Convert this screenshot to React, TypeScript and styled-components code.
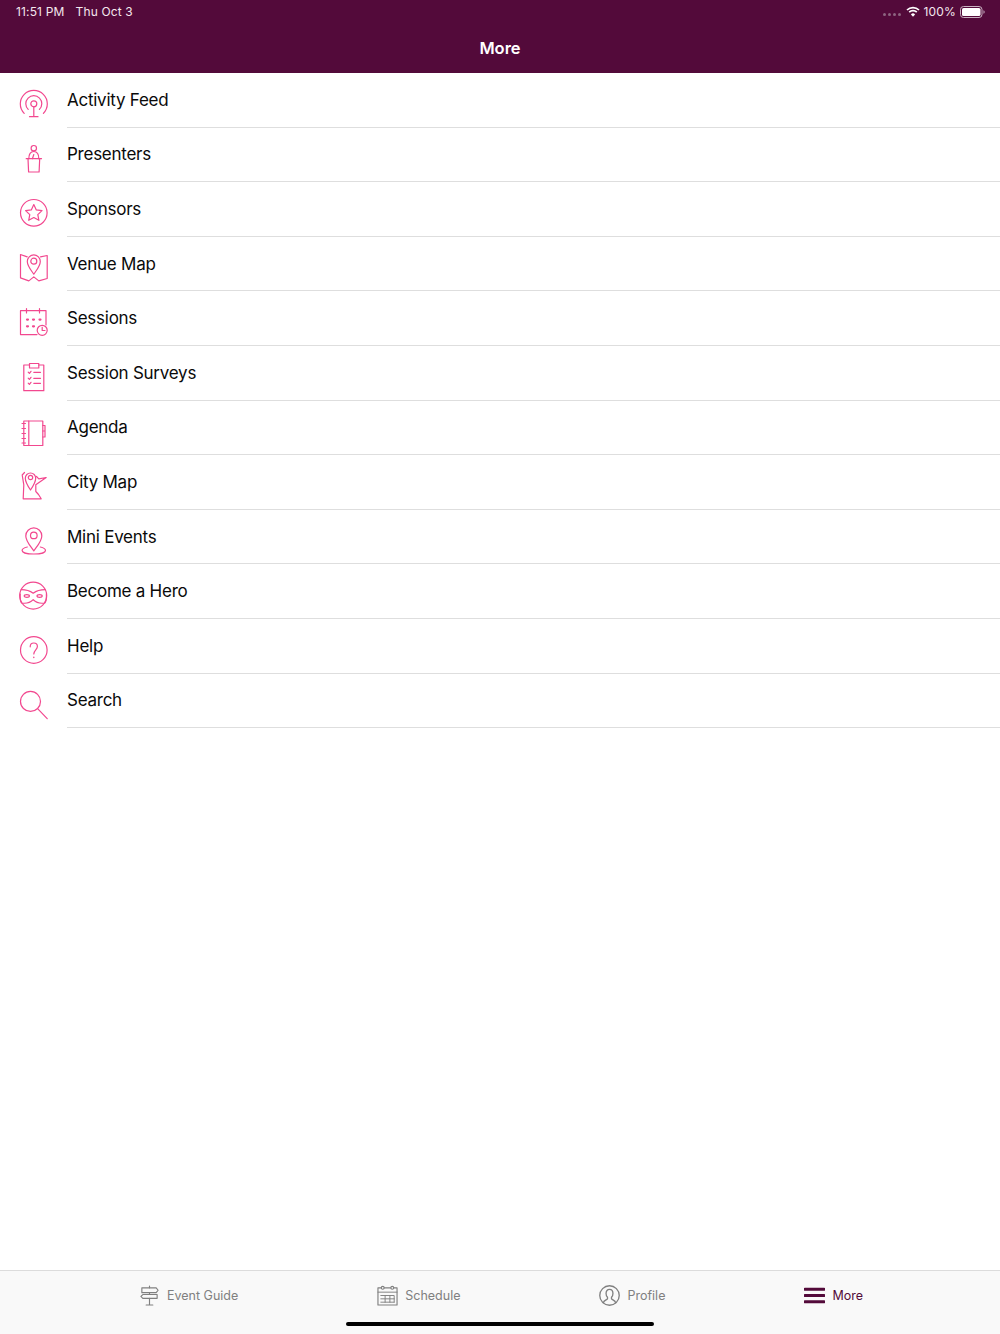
import React from 'react'
import styled, { createGlobalStyle } from 'styled-components'

const GlobalStyle = createGlobalStyle`
  html, body {
    margin: 0;
    padding: 0;
    background: #fff;
  }
  body {
    font-family: Inter, "Liberation Sans", sans-serif;
  }
`

const Page = styled.div`
  width: 1000px;
  height: 1334px;
  display: flex;
  flex-direction: column;
  position: relative;
  overflow: hidden;
`

const Header = styled.header`
  background: #530a3a;
  color: #fff;
  height: 73px;
  flex-shrink: 0;
`

const StatusBar = styled.div`
  height: 23px;
  padding: 0 15px 0 16px;
  display: flex;
  align-items: center;
  justify-content: space-between;
  font-size: 12px;
  letter-spacing: 0.15px;
  color: #f3e7ee;
`

const StatusLeft = styled.div`
  display: flex;
  gap: 11px;
`

const StatusRight = styled.div`
  display: flex;
  align-items: center;
  gap: 4px;
`

const Signal = styled.div`
  display: flex;
  gap: 2px;
  margin-top: 5px;
  margin-right: 1px;
`

const Dot = styled.span`
  width: 3px;
  height: 3px;
  border-radius: 50%;
  background: #8d6580;
`

const NavTitle = styled.h1`
  margin: 0;
  height: 50px;
  line-height: 50px;
  text-align: center;
  font-size: 16.5px;
  font-weight: 600;
`

const List = styled.ul`
  list-style: none;
  margin: 0;
  padding: 0;
  flex: 1;
`

const Row = styled.li`
  height: 54.6px;
  display: flex;
`

const IconCell = styled.div`
  width: 67px;
  flex-shrink: 0;
  padding: 17px 0 0 19.5px;
  box-sizing: border-box;
`

const PinkIcon = styled.svg`
  display: block;
  width: 28px;
  height: 28px;
  overflow: visible;
  fill: none;
  stroke: #f2488f;
  stroke-width: 1.2;
  stroke-linecap: round;
  stroke-linejoin: round;
`

const RowLabel = styled.div`
  flex: 1;
  display: flex;
  align-items: center;
  font-size: 17px;
  letter-spacing: -0.25px;
  color: #0a0a0a;
  border-bottom: 1px solid #dedede;
`

const TabBar = styled.nav`
  height: 64px;
  flex-shrink: 0;
  box-sizing: border-box;
  background: #f9f9f9;
  border-top: 1px solid #dcdcdc;
  padding: 0 137px 15px 139px;
  display: flex;
  align-items: center;
  justify-content: space-between;
`

const Tab = styled.div<{ $active?: boolean }>`
  display: flex;
  align-items: center;
  gap: 7px;
  font-size: 12.5px;
  color: ${p => (p.$active ? '#530a3a' : '#808080')};
`

const TabIcon = styled.svg`
  display: block;
  width: 21px;
  height: 21px;
  fill: none;
  stroke: currentColor;
  stroke-width: 1.2;
  stroke-linecap: round;
  stroke-linejoin: round;
`

const HomeIndicator = styled.div`
  position: absolute;
  left: 346px;
  bottom: 8px;
  width: 308px;
  height: 4px;
  border-radius: 2px;
  background: #000;
`

const items: { label: string; icon: React.ReactNode }[] = [
  {
    label: 'Activity Feed',
    icon: (
      <>
        <circle cx="13.8" cy="13.8" r="3" />
        <path d="M13.8 16.8V26.7M9.5 26.7H18" />
        <path d="M8.2 19.4A8 8 0 1 1 19.4 19.4" />
        <path d="M4.2 23.4A13.5 13.5 0 1 1 23.4 23.4" />
      </>
    ),
  },
  {
    label: 'Presenters',
    icon: (
      <>
        <circle cx="13.8" cy="3.2" r="2.7" />
        <path d="M8.8 13.7C8.8 9 10.5 6.5 13.8 6.5S18.8 9 18.8 13.7" />
        <path d="M13.8 9.5L12.4 13.7" />
        <path d="M6.2 13.7H21.5M8 13.7L8.6 27H19.1L19.7 13.7" />
      </>
    ),
  },
  {
    label: 'Sponsors',
    icon: (
      <>
        <circle cx="13.8" cy="13.8" r="13.3" />
        <path d="M13.8 5.6L16.3 10.9L22 11.6L17.8 15.6L18.9 21.3L13.8 18.5L8.7 21.3L9.8 15.6L5.6 11.6L11.3 10.9Z" />
      </>
    ),
  },
  {
    label: 'Venue Map',
    icon: (
      <>
        <path d="M7.2 2.9L0.5 0.5V23.9L8.8 26.9L13.8 22.9L18.8 26.9L27.2 24.5V1.5L20.5 2.9" />
        <path d="M13.8 20.2C10.5 15.5 7.3 11.6 7.3 7.4A6.5 6.5 0 0 1 20.3 7.4C20.3 11.6 17.1 15.5 13.8 20.2Z" />
        <circle cx="13.8" cy="7.2" r="3" />
      </>
    ),
  },
  {
    label: 'Sessions',
    icon: (
      <>
        <path d="M17 26.6H0.5V2.7H26V17" />
        <path d="M6.5 0.5V5M19.5 0.5V5" />
        <path d="M7 11.6h1M13 11.6h1M19.5 11.6h1M7 18.3h1M13 18.3h1" strokeWidth="2.2" />
        <circle cx="22.2" cy="22.3" r="5" />
        <path d="M22.2 19.3V22.5H25" />
      </>
    ),
  },
  {
    label: 'Session Surveys',
    icon: (
      <>
        <path d="M9.5 2H3.8V27.7H23.8V2H18.8" />
        <path d="M9.5 0.5H18.8V5H9.5Z" />
        <path d="M8.2 9.2L9.4 10.4L11 8.3M8.2 15.2L9.4 16.4L11 14.3M8.2 20.2L9.4 21.4L11 19.3" />
        <path d="M13.8 9.3H20.5M13.8 15.3H20.5M13.8 20.3H20.5" />
      </>
    ),
  },
  {
    label: 'Agenda',
    icon: (
      <>
        <path d="M3.8 3H22.8V27.5H3.8Z" />
        <path d="M8.8 3V27.5M22.8 7.5H25V19H22.8M22.8 13H25" />
        <path d="M2 5.5H5.5M2 10.5H5.5M2 15.5H5.5M2 20.5H5.5M2 25H5.5" />
      </>
    ),
  },
  {
    label: 'City Map',
    icon: (
      <>
        <path d="M4.5 0.5L2.2 3L3.8 12.8L3.2 26.8H21.2L18.5 22.5L15.8 19.5V12.8L26.2 5.5L18.8 6.8L16.5 4.5" />
        <path d="M10.5 18C7.5 13.5 5.3 10 5.3 6.2A5.2 5.2 0 0 1 15.7 6.2C15.7 10 13.5 13.5 10.5 18Z" fill="#fff" />
        <circle cx="10.5" cy="5.5" r="2.2" />
      </>
    ),
  },
  {
    label: 'Mini Events',
    icon: (
      <>
        <path d="M13.8 23.9C10 18.5 5.8 14 5.8 8.9A8 8 0 0 1 21.8 8.9C21.8 14 17.6 18.5 13.8 23.9Z" />
        <circle cx="13.8" cy="8.4" r="3.3" />
        <path d="M7.3 20C4 20.8 2.1 22 2.1 23.4C2.1 25.5 7.3 27 13.8 27S25.5 25.5 25.5 23.4C25.5 22 23.6 20.8 20.3 20" />
      </>
    ),
  },
  {
    label: 'Become a Hero',
    icon: (
      <>
        <circle cx="13.2" cy="14.6" r="13.5" />
        <path d="M1.2 8.6C4 8.6 9 9 13.2 12.2C17.4 9 22.4 8.6 25.2 8.6" />
        <path d="M0.2 13C0 17 0.6 21 1.6 22C5 22.6 10 21.8 13.2 18.6C16.4 21.8 21.4 22.6 24.8 22C25.8 21 26.6 17 26.4 13" />
        <ellipse cx="6.8" cy="15" rx="2.6" ry="1.3" />
        <ellipse cx="19.6" cy="15" rx="2.6" ry="1.3" />
      </>
    ),
  },
  {
    label: 'Help',
    icon: (
      <>
        <circle cx="13.8" cy="14" r="13.3" />
        <path d="M10.2 10.8C10.2 8.4 11.8 7 13.8 7S17.4 8.4 17.4 10.6C17.4 13.4 13.8 14.4 13.8 18" />
        <path d="M13.8 21.2V21.6" strokeWidth="1.4" />
      </>
    ),
  },
  {
    label: 'Search',
    icon: (
      <>
        <circle cx="10.5" cy="10.4" r="10" />
        <path d="M17.6 17.6L27.2 27.7" />
      </>
    ),
  },
]

function App() {
  return (
    <Page>
      <GlobalStyle />
      <Header>
        <StatusBar>
          <StatusLeft>
            <span>11:51 PM</span>
            <span>Thu Oct 3</span>
          </StatusLeft>
          <StatusRight>
            <Signal>
              <Dot />
              <Dot />
              <Dot />
              <Dot />
            </Signal>
            <svg width="14" height="11" viewBox="0 0 14 11" fill="none" stroke="#fff" strokeWidth="1.7">
              <path d="M1 4A8.6 8.6 0 0 1 13 4" />
              <path d="M3.2 6.2A5.4 5.4 0 0 1 10.8 6.2" />
              <path d="M7 10.8L4.9 8.4A3 3 0 0 1 9.1 8.4Z" fill="#fff" stroke="none" />
            </svg>
            <span>100%</span>
            <svg width="25" height="12" viewBox="0 0 25 12">
              <rect x="0.5" y="0.5" width="21.5" height="11" rx="3" fill="none" stroke="#c9b1c1" />
              <rect x="2" y="2" width="18.5" height="8" rx="1.6" fill="#fff" />
              <path d="M23.5 4.2C24.3 4.5 24.6 5.2 24.6 6S24.3 7.5 23.5 7.8Z" fill="#c9b1c1" />
            </svg>
          </StatusRight>
        </StatusBar>
        <NavTitle>More</NavTitle>
      </Header>

      <List>
        {items.map(item => (
          <Row key={item.label}>
            <IconCell>
              <PinkIcon viewBox="0 0 28 28">{item.icon}</PinkIcon>
            </IconCell>
            <RowLabel>{item.label}</RowLabel>
          </Row>
        ))}
      </List>

      <TabBar>
        <Tab>
          <TabIcon viewBox="0 0 22 22">
            <path d="M11 1V3M11 8V10M11 14V21M7.5 21H14.5" />
            <path d="M3 3H18L20 5.5L18 8H3Z" />
            <path d="M19 10H4L2 12L4 14H19Z" />
          </TabIcon>
          Event Guide
        </Tab>
        <Tab>
          <TabIcon viewBox="0 0 22 22">
            <path d="M1 3H21V21H1Z" />
            <path d="M1 7.5H21M4 11H18V18M4 14.5H18M4 18H18M8.5 11V18M13.5 11V18" strokeWidth="1" />
            <circle cx="6" cy="3" r="1.5" fill="#f9f9f9" />
            <circle cx="16" cy="3" r="1.5" fill="#f9f9f9" />
          </TabIcon>
          Schedule
        </Tab>
        <Tab>
          <TabIcon viewBox="0 0 22 22">
            <circle cx="11" cy="11" r="10.2" strokeWidth="1.4" />
            <path d="M4.5 18.6C5 16 8.5 15.6 8.9 14.4V12.8C7.9 11.8 7.4 10.4 7.4 8.8C7.4 6.2 8.8 4.6 11 4.6S14.6 6.2 14.6 8.8C14.6 10.4 14.1 11.8 13.1 12.8V14.4C13.5 15.6 17 16 17.5 18.6" strokeWidth="1.4" />
          </TabIcon>
          Profile
        </Tab>
        <Tab $active>
          <TabIcon viewBox="0 0 22 22">
            <path d="M1 4.5H21M1 11H21M1 17.5H21" strokeWidth="3" strokeLinecap="round" />
          </TabIcon>
          More
        </Tab>
      </TabBar>
      <HomeIndicator />
    </Page>
  )
}

export default App
